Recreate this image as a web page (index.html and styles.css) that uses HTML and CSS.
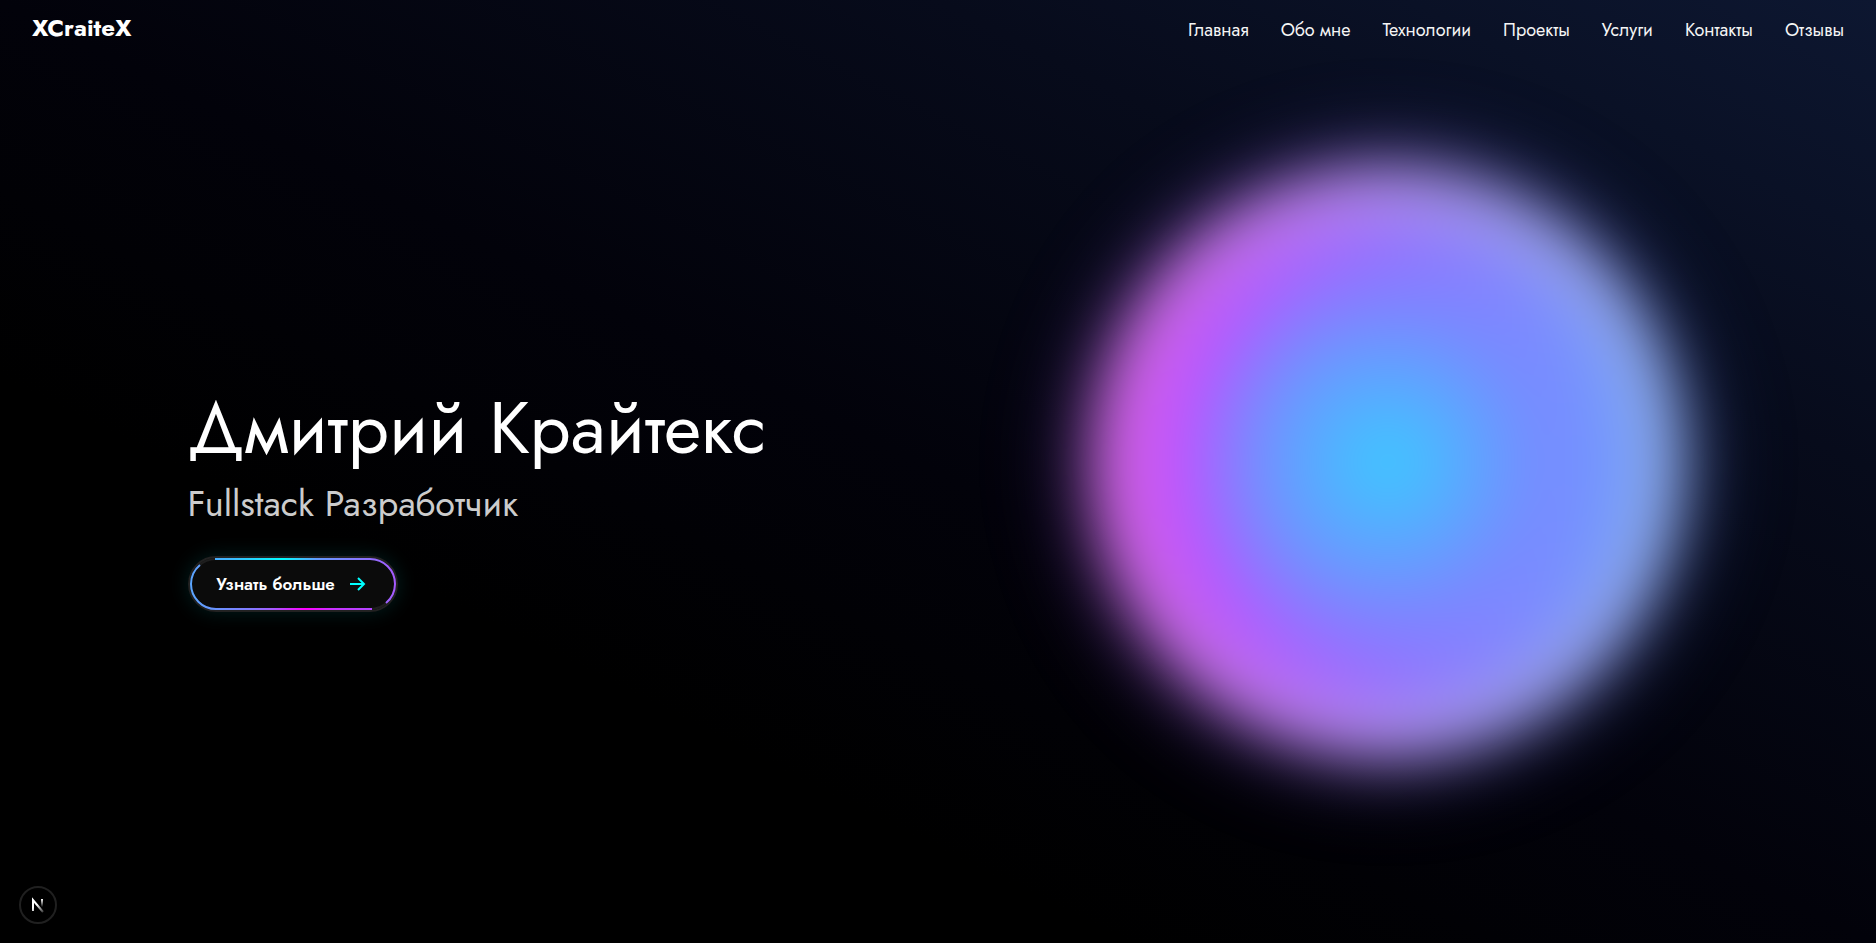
FILE: index.html
```html
<!DOCTYPE html>
<html lang="ru">
<head>
<meta charset="utf-8">
<title>XCraiteX</title>
<link rel="stylesheet" href="styles.css">
</head>
<body>
<div class="page">
  <header class="header">
    <a class="logo" href="#">XCraiteX</a>
    <nav class="nav">
      <a class="nav-link" href="#home">Главная</a>
      <a class="nav-link" href="#about">Обо мне</a>
      <a class="nav-link" href="#tech">Технологии</a>
      <a class="nav-link" href="#projects">Проекты</a>
      <a class="nav-link" href="#services">Услуги</a>
      <a class="nav-link" href="#contacts">Контакты</a>
      <a class="nav-link" href="#reviews">Отзывы</a>
    </nav>
  </header>
  <main class="hero">
    <section class="intro">
      <h1 class="title">Дмитрий Крайтекс</h1>
      <p class="subtitle">Fullstack Разработчик</p>
      <button class="more" type="button">
        <svg class="more-ring" aria-hidden="true" width="210" height="56" viewBox="0 0 210 56">
          <defs>
            <linearGradient id="ring-top" x1="3" x2="207" y1="0" y2="0" gradientUnits="userSpaceOnUse">
              <stop offset="0" stop-color="#5a9cff"/>
              <stop offset=".2" stop-color="#3cbcff"/>
              <stop offset=".45" stop-color="#00ffff"/>
              <stop offset=".62" stop-color="#649bff"/>
              <stop offset="1" stop-color="#a55aff"/>
            </linearGradient>
            <linearGradient id="ring-bottom" x1="3" x2="207" y1="0" y2="0" gradientUnits="userSpaceOnUse">
              <stop offset="0" stop-color="#5aa5ff"/>
              <stop offset=".3" stop-color="#8278ff"/>
              <stop offset=".4" stop-color="#a65aff"/>
              <stop offset=".56" stop-color="#ff00ff"/>
              <stop offset=".7" stop-color="#c832ff"/>
              <stop offset="1" stop-color="#a850ff"/>
            </linearGradient>
          </defs>
          <rect x="1" y="1" width="208" height="54" rx="27" fill="#0b0b0b" stroke="#222" stroke-width="2"/>
          <rect x="3" y="3" width="204" height="50" rx="25" fill="none" stroke="#1e1e1e" stroke-width="2"/>
          <path d="M27 3H182A25 25 0 0 1 207 28A25 25 0 0 1 198 47" fill="none" stroke="url(#ring-top)" stroke-width="2"/>
          <path d="M12 9A25 25 0 0 0 3 28A25 25 0 0 0 28 53H184" fill="none" stroke="url(#ring-bottom)" stroke-width="2"/>
        </svg>
        <span class="more-label">Узнать больше</span>
        <svg class="more-arrow" aria-hidden="true" width="20" height="20" viewBox="0 0 20 20" fill="none" stroke="#0ff" stroke-width="2"><path d="M3 10H17M11 4L17 10L11 16"/></svg>
      </button>
    </section>
    <div class="stage"><div class="orb"></div></div>
  </main>
  <button class="badge" type="button" aria-label="Next.js">
    <svg width="34" height="34" viewBox="3 3 34 34" fill="none">
      <defs>
        <linearGradient id="n-leg" x1="24" y1="14" x2="24" y2="22" gradientUnits="userSpaceOnUse"><stop stop-color="#fff"/><stop offset="1" stop-color="#fff" stop-opacity="0"/></linearGradient>
        <linearGradient id="n-diag" x1="20" y1="19" x2="26" y2="27" gradientUnits="userSpaceOnUse"><stop stop-color="#fff"/><stop offset="1" stop-color="#fff" stop-opacity=".2"/></linearGradient>
      </defs>
      <path d="M15 26V15L25 27" stroke="url(#n-diag)" stroke-width="2"/>
      <path d="M24 14V22" stroke="url(#n-leg)" stroke-width="2"/>
    </svg>
  </button>
</div>
</body>
</html>
```

FILE: styles.css
```css
* { box-sizing: border-box; }
body {
  margin: 0;
  background: #000;
  color: #fff;
  font-family: Jost, Lato, "Open Sans", sans-serif;
}
.page {
  position: relative;
  display: flex;
  flex-direction: column;
  min-height: 100vh;
  overflow: hidden;
  background: linear-gradient(to top right, #000 30%, #02020a 50%, #070b1b 75%, #0d1731 100%);
}
.header {
  display: flex;
  justify-content: space-between;
  align-items: center;
  height: 60px;
  padding: 0 32px;
}
.logo {
  padding-bottom: 4px;
  color: #fff;
  font-size: 24px;
  font-weight: 700;
  line-height: 36px;
  text-decoration: none;
}
.nav { display: flex; gap: 32px; }
.nav-link {
  color: #f5f5f5;
  font-size: 18px;
  line-height: 28px;
  text-decoration: none;
}
.hero {
  flex: 1;
  display: grid;
  grid-template-columns: 48% 52%;
  align-items: center;
  padding-bottom: 7px;
}
.intro { padding-left: 10vw; }
.title {
  margin: 0 0 4px;
  font-size: 72px;
  font-weight: 400;
  line-height: 88px;
  white-space: nowrap;
}
.subtitle {
  margin: 0 0 26px;
  color: #ccc;
  font-size: 36px;
  line-height: 54px;
}
.more {
  position: relative;
  display: flex;
  align-items: center;
  gap: 12px;
  width: 210px;
  height: 56px;
  padding: 0 29px;
  border: 0;
  border-radius: 28px;
  background: none;
  color: #fff;
  font: inherit;
  font-size: 17px;
  font-weight: 600;
  white-space: nowrap;
  box-shadow: 0 0 20px rgba(0, 255, 255, .12);
}
.more-ring { position: absolute; inset: 0; }
.more-label, .more-arrow { position: relative; flex: none; }
.stage {
  display: flex;
  justify-content: center;
  padding-bottom: 72px;
}
.orb {
  flex: none;
  width: 592px;
  height: 592px;
  border-radius: 50%;
  background: linear-gradient(90deg, #cc6cd0 0, #c080dc 28%, #b494e0 50%, #a4a4e0 75%, #94b0e4 100%);
  box-shadow: -10px 0 70px rgba(180, 60, 230, .4), 10px 0 70px rgba(20, 110, 170, .45);
  filter: blur(28px);
}
.orb::before {
  content: "";
  display: block;
  height: 100%;
  border-radius: 50%;
  background:
    radial-gradient(closest-side, #3accff 0, #56acff 24%, #6f94ff 42%, rgba(120, 136, 255, .7) 54%, rgba(130, 120, 255, 0) 74%),
    linear-gradient(90deg, #d448ff 5%, #c050ff 20%, #9670ff 50%, #6c9cff 90%);
  mask-image: radial-gradient(closest-side, #000 74%, transparent 98%);
}
.badge {
  position: absolute;
  left: 19px;
  bottom: 19px;
  display: grid;
  place-items: center;
  width: 38px;
  height: 38px;
  padding: 0;
  border: 2px solid #202020;
  border-radius: 50%;
  background: #000;
}
```
